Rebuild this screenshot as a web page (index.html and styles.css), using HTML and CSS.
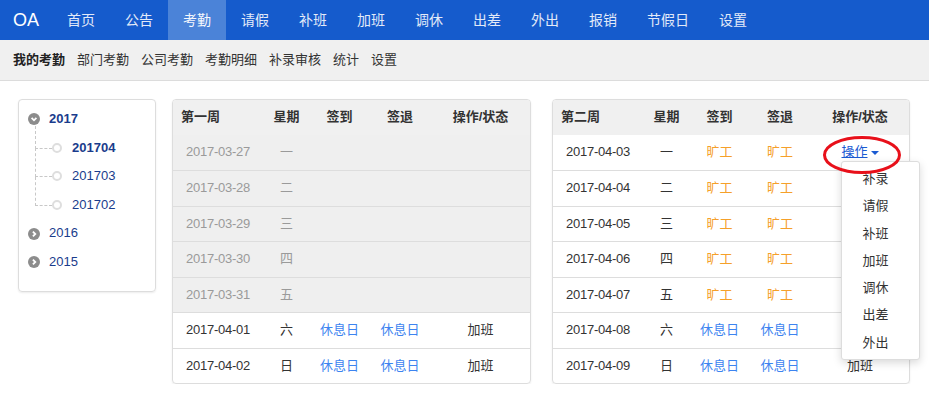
FILE: index.html
```html
<!DOCTYPE html>
<html lang="zh-CN">
<head>
    <meta charset="UTF-8">
    <title>OA - 考勤</title>
    <link rel="stylesheet" href="styles.css">
</head>
<body>

<!-- Top navigation -->
<div class="navbar">
    <span class="brand">OA</span>
    <a class="nav-item" href="#">首页</a>
    <a class="nav-item" href="#">公告</a>
    <a class="nav-item active" href="#">考勤</a>
    <a class="nav-item" href="#">请假</a>
    <a class="nav-item" href="#">补班</a>
    <a class="nav-item" href="#">加班</a>
    <a class="nav-item" href="#">调休</a>
    <a class="nav-item" href="#">出差</a>
    <a class="nav-item" href="#">外出</a>
    <a class="nav-item" href="#">报销</a>
    <a class="nav-item" href="#">节假日</a>
    <a class="nav-item" href="#">设置</a>
</div>

<!-- Sub navigation -->
<div class="subnav">
    <a class="current" href="#">我的考勤</a>
    <a href="#">部门考勤</a>
    <a href="#">公司考勤</a>
    <a href="#">考勤明细</a>
    <a href="#">补录审核</a>
    <a href="#">统计</a>
    <a href="#">设置</a>
</div>

<div class="main">
    <!-- Month tree -->
    <div class="tree">
        <div class="year open">
            <svg class="toggle" viewBox="0 0 12 12"><circle cx="6" cy="6" r="6" fill="#8c8c8c"/><polyline points="3.6,4.9 6,7.3 8.4,4.9" fill="none" stroke="#fff" stroke-width="1.8"/></svg>
            <span>2017</span>
        </div>
        <ul class="months">
            <li class="active"><span class="dot"></span>201704</li>
            <li><span class="dot"></span>201703</li>
            <li><span class="dot"></span>201702</li>
        </ul>
        <div class="year">
            <svg class="toggle" viewBox="0 0 12 12"><circle cx="6" cy="6" r="6" fill="#8c8c8c"/><polyline points="4.9,3.6 7.3,6 4.9,8.4" fill="none" stroke="#fff" stroke-width="1.8"/></svg>
            <span>2016</span>
        </div>
        <div class="year">
            <svg class="toggle" viewBox="0 0 12 12"><circle cx="6" cy="6" r="6" fill="#8c8c8c"/><polyline points="4.9,3.6 7.3,6 4.9,8.4" fill="none" stroke="#fff" stroke-width="1.8"/></svg>
            <span>2015</span>
        </div>
    </div>

    <!-- Week 1 -->
    <div class="week">
        <table>
            <colgroup>
                <col class="c-date"><col class="c-day"><col class="c-in"><col class="c-out"><col class="c-op">
            </colgroup>
            <thead>
                <tr><th>第一周</th><th>星期</th><th>签到</th><th>签退</th><th>操作/状态</th></tr>
            </thead>
            <tbody>
                <tr class="past"><td class="date">2017-03-27</td><td>一</td><td></td><td></td><td></td></tr>
                <tr class="past"><td class="date">2017-03-28</td><td>二</td><td></td><td></td><td></td></tr>
                <tr class="past"><td class="date">2017-03-29</td><td>三</td><td></td><td></td><td></td></tr>
                <tr class="past"><td class="date">2017-03-30</td><td>四</td><td></td><td></td><td></td></tr>
                <tr class="past"><td class="date">2017-03-31</td><td>五</td><td></td><td></td><td></td></tr>
                <tr><td class="date">2017-04-01</td><td>六</td><td class="rest">休息日</td><td class="rest">休息日</td><td>加班</td></tr>
                <tr><td class="date">2017-04-02</td><td>日</td><td class="rest">休息日</td><td class="rest">休息日</td><td>加班</td></tr>
            </tbody>
        </table>
    </div>

    <!-- Week 2 -->
    <div class="week second">
        <table>
            <colgroup>
                <col class="c-date"><col class="c-day"><col class="c-in"><col class="c-out"><col class="c-op">
            </colgroup>
            <thead>
                <tr><th>第二周</th><th>星期</th><th>签到</th><th>签退</th><th>操作/状态</th></tr>
            </thead>
            <tbody>
                <tr>
                    <td class="date">2017-04-03</td><td>一</td><td class="absent">旷工</td><td class="absent">旷工</td>
                    <td>
                        <span class="op-wrap">
                            <a class="op" href="#">操作</a><span class="caret"></span>
                            <!-- annotation circle -->
                            <svg class="mark" viewBox="0 0 82 42"><ellipse cx="41" cy="21" rx="37.5" ry="17.5" fill="none" stroke="#e8101a" stroke-width="3"/></svg>
                            <ul class="dropdown">
                                <li>补录</li>
                                <li>请假</li>
                                <li>补班</li>
                                <li>加班</li>
                                <li>调休</li>
                                <li>出差</li>
                                <li>外出</li>
                            </ul>
                        </span>
                    </td>
                </tr>
                <tr><td class="date">2017-04-04</td><td>二</td><td class="absent">旷工</td><td class="absent">旷工</td><td><span class="op late">操作</span><span class="caret dark"></span></td></tr>
                <tr><td class="date">2017-04-05</td><td>三</td><td class="absent">旷工</td><td class="absent">旷工</td><td><span class="op late">操作</span><span class="caret dark"></span></td></tr>
                <tr><td class="date">2017-04-06</td><td>四</td><td class="absent">旷工</td><td class="absent">旷工</td><td><span class="op late">操作</span><span class="caret dark"></span></td></tr>
                <tr><td class="date">2017-04-07</td><td>五</td><td class="absent">旷工</td><td class="absent">旷工</td><td><span class="op late">操作</span><span class="caret dark"></span></td></tr>
                <tr><td class="date">2017-04-08</td><td>六</td><td class="rest">休息日</td><td class="rest">休息日</td><td>加班</td></tr>
                <tr><td class="date">2017-04-09</td><td>日</td><td class="rest">休息日</td><td class="rest">休息日</td><td>加班</td></tr>
            </tbody>
        </table>
    </div>
</div>

</body>
</html>
```

FILE: styles.css
```css
body {
    margin: 0;
    font-family: "Liberation Sans", "Noto Sans CJK SC", sans-serif;
    font-size: 13px;
    color: #333;
    background-color: #fff;
}

a {
    text-decoration: none;
}

/* Top navigation */
.navbar {
    display: flex;
    height: 40px;
    background-color: #155bcc;
}

.brand {
    padding: 0 13px 0 13px;
    line-height: 40px;
    font-size: 18px;
    color: #fff;
}

.nav-item {
    padding: 0 15px;
    line-height: 40px;
    font-size: 14px;
    color: #e2eaf8;
}

.nav-item.active {
    background-color: #4b83d8;
    color: #f4f7fc;
}

/* Sub navigation */
.subnav {
    display: flex;
    gap: 12px;
    height: 40px;
    padding-left: 13px;
    background-color: #f0f0f0;
    border-bottom: 1px solid #dcdcdc;
}

.subnav a {
    line-height: 40px;
    color: #333;
}

.subnav a.current {
    font-weight: bold;
    color: #222;
}

/* Main area */
.main {
    display: flex;
    align-items: flex-start;
    gap: 16px;
    padding: 18px 0 0 18px;
}

/* Tree */
.tree {
    width: 127px;
    padding: 5px 0 14px 9px;
    border: 1px solid #ddd;
    border-radius: 4px;
    box-shadow: 0 1px 2px rgba(0, 0, 0, 0.08);
    color: #1a3c8c;
}

.year {
    display: flex;
    align-items: center;
    line-height: 28.6px;
}

.year.open {
    font-weight: bold;
}

.toggle {
    width: 12px;
    height: 12px;
    margin-right: 9px;
}

.months {
    list-style: none;
    margin: 0;
    padding: 0;
}

.months li {
    position: relative;
    display: flex;
    align-items: center;
    padding-left: 24px;
    line-height: 28.6px;
}

.months li.active {
    font-weight: bold;
}

.months li::before {
    content: "";
    position: absolute;
    left: 7px;
    top: -14px;
    width: 16px;
    height: 28px;
    border-left: 1px dashed #c8c8c8;
    border-bottom: 1px dashed #c8c8c8;
}

.months li:first-child::before {
    top: -8px;
    height: 22px;
}

.dot {
    position: relative;
    width: 6px;
    height: 6px;
    margin-right: 10px;
    border: 2px solid #dedede;
    border-radius: 50%;
    background-color: #fff;
}

/* Week tables */
.week {
    width: 357px;
    border: 1px solid #ddd;
    border-radius: 4px;
    box-shadow: 0 1px 2px rgba(0, 0, 0, 0.08);
}

.week.second {
    margin-left: 5px;
    width: 356px;
}

table {
    width: 100%;
    border-collapse: separate;
    border-spacing: 0;
    table-layout: fixed;
}

.c-date { width: 90px; }
.c-day { width: 47px; }
.c-in { width: 59px; }
.c-out { width: 62px; }

th {
    padding: 8px 0;
    line-height: 18.5px;
    font-weight: bold;
    text-align: center;
    background-color: #f0f0f0;
}

th:first-child {
    padding-left: 8px;
    text-align: left;
    border-top-left-radius: 3px;
}

th:last-child {
    border-top-right-radius: 3px;
}

td {
    padding: 8px 0;
    line-height: 18.5px;
    text-align: center;
    border-top: 1px solid #ddd;
    white-space: nowrap;
}

tbody tr:first-child td {
    border-top: none;
    padding-top: 8.5px;
    padding-bottom: 8.5px;
}

td.date {
    letter-spacing: -0.25px;
}

tr.past td {
    background-color: #efefef;
    color: #9a9a9a;
}

.rest {
    color: #3d84f0;
}

.absent {
    color: #f5a02a;
}

/* Operation dropdown */
.op-wrap {
    position: relative;
    display: inline-block;
}

.op {
    color: #1a5ad2;
    text-decoration: underline;
}

.op.late {
    color: #e0473f;
    text-decoration: none;
}

.caret {
    display: inline-block;
    margin-left: 3px;
    vertical-align: middle;
    border-top: 4px solid #1a5ad2;
    border-left: 4px solid transparent;
    border-right: 4px solid transparent;
}

.caret.dark {
    border-top-color: #555;
}

.mark {
    position: absolute;
    left: -20px;
    top: -9px;
    z-index: 3;
    width: 82px;
    height: 42px;
    pointer-events: none;
}

.dropdown {
    position: absolute;
    left: 0;
    top: 18px;
    z-index: 2;
    width: 77px;
    margin: 0;
    padding: 3px 0;
    list-style: none;
    background-color: #fff;
    border: 1px solid #ddd;
    border-radius: 3px;
    box-shadow: 0 3px 8px rgba(0, 0, 0, 0.15);
    text-align: left;
}

.dropdown li {
    padding: 0 20px;
    line-height: 27.3px;
    color: #333;
}
```
